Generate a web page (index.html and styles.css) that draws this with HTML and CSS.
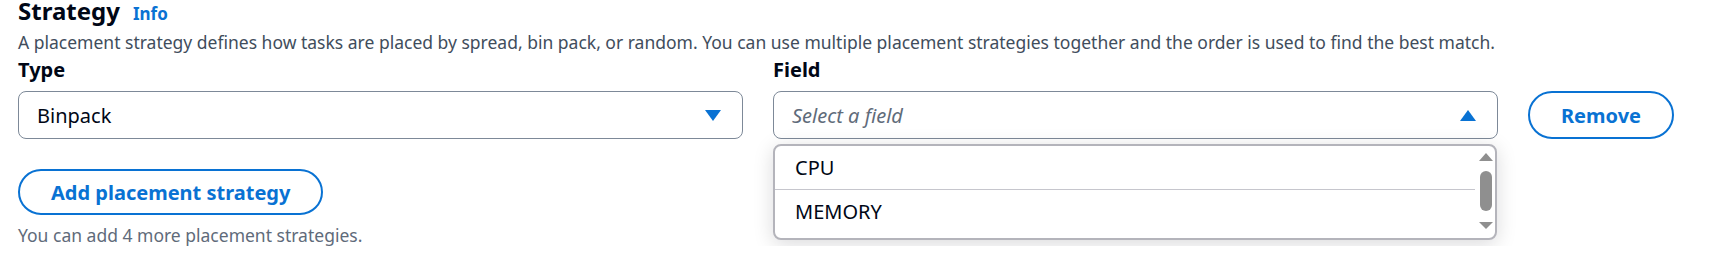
FILE: index.html
```html
<!DOCTYPE html>
<html lang="en">
  <head>
    <meta charset="utf-8">
    <title>Placement strategy</title>
    <link rel="stylesheet" href="styles.css">
  </head>
  <body>
    <div class="strategy">
      <div class="header">
        <h2>Strategy</h2>
        <a class="info" href="#">Info</a>
      </div>
      <p class="desc">A placement strategy defines how tasks are placed by spread, bin pack, or random. You can use multiple placement strategies together and the order is used to find the best match.</p>
      <div class="row">
        <div class="col">
          <label>Type</label>
          <div class="select">
            <span class="value">Binpack</span>
            <svg class="caret" width="16" height="11" viewBox="0 0 16 11"><polygon points="0,0 16,0 8,11" /></svg>
          </div>
        </div>
        <div class="col">
          <label>Field</label>
          <div class="select_wrap">
            <div class="select">
              <span class="placeholder">Select a field</span>
              <svg class="caret" width="16" height="11" viewBox="0 0 16 11"><polygon points="0,11 16,11 8,0" /></svg>
            </div>
            <div class="dropdown">
              <ul class="options">
                <li>CPU</li>
                <li>MEMORY</li>
              </ul>
              <div class="scrollbar">
                <span class="arrow_up"></span>
                <span class="thumb"></span>
                <span class="arrow_down"></span>
              </div>
            </div>
          </div>
        </div>
        <div class="col_btn">
          <button class="btn remove" type="button">Remove</button>
        </div>
      </div>
      <button class="btn add" type="button">Add placement strategy</button>
      <p class="hint">You can add 4 more placement strategies.</p>
    </div>
  </body>
</html>
```

FILE: styles.css
```css
body {
  margin: 0;
  background-color: #ffffff;
  font-family: "Noto Sans", "Open Sans", sans-serif;
  color: #000716;
}
.strategy {
  padding-left: 18px;
}
.header {
  display: flex;
  align-items: baseline;
  gap: 13px;
  height: 22px;
}
.header h2 {
  margin: 0;
  font-size: 24px;
  line-height: 22px;
  font-weight: 700;
}
.info {
  font-size: 17px;
  font-weight: 700;
  color: #0972d3;
  text-decoration: none;
}
.desc {
  margin: 8px 0 0 0;
  font-size: 17.5px;
  line-height: 24px;
  color: #414d5c;
}
.row {
  display: grid;
  grid-template-columns: 725px 725px auto;
  column-gap: 30px;
  align-items: end;
  margin-top: 4px;
}
.col label {
  display: block;
  font-size: 20px;
  font-weight: 700;
  line-height: 24px;
  margin-bottom: 9px;
}
.select {
  box-sizing: border-box;
  height: 48px;
  border: 1px solid #7d8998;
  border-radius: 8px;
  display: flex;
  align-items: center;
  justify-content: space-between;
  padding: 0 21px 0 18px;
  font-size: 20px;
}
.caret {
  fill: #0972d3;
}
.placeholder {
  font-style: italic;
  color: #5f6b7a;
}
.select_wrap {
  position: relative;
}
.dropdown {
  position: absolute;
  top: 53px;
  left: 0;
  right: 1px;
  height: 96px;
  box-sizing: border-box;
  border: 2px solid #b4b4bb;
  border-radius: 8px;
  background-color: #ffffff;
  box-shadow: 0 4px 20px rgba(0, 7, 22, 0.15);
  display: flex;
  overflow: hidden;
  z-index: 2;
}
.options {
  list-style: none;
  margin: 0;
  padding: 0 2px 0 0;
  flex: 1;
}
.options li {
  padding: 10px 20px 9px 20px;
  font-size: 20px;
  line-height: 24px;
}
.options li:first-child {
  border-bottom: 1px solid #c6c6cd;
}
.scrollbar {
  width: 18px;
  display: flex;
  flex-direction: column;
  align-items: center;
}
.arrow_up {
  margin-top: 7px;
  width: 0;
  height: 0;
  border-left: 7px solid transparent;
  border-right: 7px solid transparent;
  border-bottom: 8px solid #8f8f8f;
}
.thumb {
  margin-top: 10px;
  width: 12px;
  height: 40px;
  border-radius: 6px;
  background-color: #8f8f8f;
}
.arrow_down {
  margin-top: 11px;
  width: 0;
  height: 0;
  border-left: 7px solid transparent;
  border-right: 7px solid transparent;
  border-top: 7px solid #8f8f8f;
}
.btn {
  box-sizing: border-box;
  background-color: #ffffff;
  border: 2px solid #0972d3;
  border-radius: 24px;
  color: #0972d3;
  font-family: "Noto Sans", "Open Sans", sans-serif;
  font-size: 20px;
  font-weight: 700;
  padding: 0 31px;
  cursor: pointer;
}
.remove {
  height: 48px;
}
.add {
  height: 46px;
  margin-top: 30px;
  display: block;
}
.hint {
  margin: 9px 0 0 0;
  font-size: 17.5px;
  line-height: 22px;
  color: #5f6b7a;
}
```
